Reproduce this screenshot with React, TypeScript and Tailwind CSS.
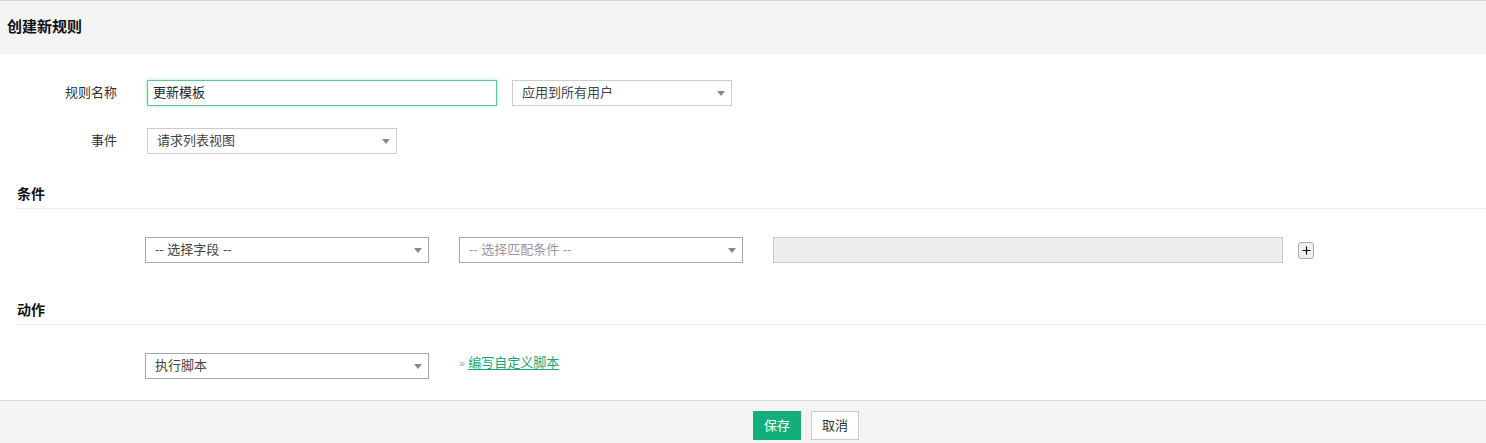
import React from 'react';

const font = { fontFamily: '"Liberation Sans", "Noto Sans CJK SC", sans-serif' };

function Select({ value, width, placeholder, dark }: { value: string; width: string; placeholder?: boolean; dark?: boolean }) {
  return (
    <div
      className={`${width} h-[26px] bg-white border ${dark ? 'border-[#a9a9a9]' : 'border-[#cccccc]'} flex items-center justify-between pl-[9px] pr-[6px]`}
    >
      <span className={`text-[13px] ${placeholder ? 'text-[#999]' : 'text-[#444]'}`}>{value}</span>
      <span className="w-0 h-0 border-l-[4px] border-r-[4px] border-t-[5px] border-l-transparent border-r-transparent border-t-[#888]" />
    </div>
  );
}

export default function App() {
  return (
    <div className="w-[1486px] h-[443px] bg-white text-[#333] overflow-hidden" style={font}>
      {/* header */}
      <div className="border-t border-[#d6d6d6] bg-[#f4f4f4] h-[54px] flex items-center px-[7px]">
        <h1 className="text-[15px] font-bold text-[#111]">创建新规则</h1>
      </div>

      {/* rule name */}
      <div className="mt-[26px] flex items-center h-[26px]">
        <label className="w-[117px] text-right text-[13px]">规则名称</label>
        <div className="ml-[30px] w-[350px] h-[26px] border border-[#5cc49a] shadow-[0_0_4px_rgba(92,196,154,0.45)] flex items-center pl-[5px] text-[13px] text-[#222]">
          更新模板
        </div>
        <div className="ml-[15px]">
          <Select value="应用到所有用户" width="w-[220px]" />
        </div>
      </div>

      {/* event */}
      <div className="mt-[22px] flex items-center h-[26px]">
        <label className="w-[117px] text-right text-[13px]">事件</label>
        <div className="ml-[30px]">
          <Select value="请求列表视图" width="w-[250px]" />
        </div>
      </div>

      {/* conditions */}
      <div className="mt-[30px] ml-[17px] border-b border-[#ebebeb] pb-[4px]">
        <h2 className="h-[20px] leading-[20px] text-[14px] font-bold text-[#111]">条件</h2>
      </div>
      <div className="mt-[28px] flex items-center pl-[145px]">
        <Select value="-- 选择字段 --" width="w-[284px]" dark />
        <div className="ml-[30px]">
          <Select value="-- 选择匹配条件 --" width="w-[284px]" placeholder dark />
        </div>
        <div className="ml-[30px] w-[510px] h-[26px] bg-[#ededed] border border-[#cccccc]" />
        <button className="ml-[15px] w-[16px] h-[17px] rounded-[3px] border border-[#aaaaaa] bg-[#f0f0f0] flex items-center justify-center">
          <svg width="9" height="9" viewBox="0 0 9 9">
            <path d="M4.5 0.5v8M0.5 4.5h8" stroke="#111" strokeWidth="1.2" />
          </svg>
        </button>
      </div>

      {/* actions */}
      <div className="mt-[37px] ml-[17px] border-b border-[#ebebeb] pb-[4px]">
        <h2 className="h-[20px] leading-[20px] text-[14px] font-bold text-[#111]">动作</h2>
      </div>
      <div className="mt-[28px] flex items-center pl-[145px]">
        <Select value="执行脚本" width="w-[284px]" dark />
        <div className="ml-[30px] text-[13px] flex items-center gap-[3px] -mt-[6px]">
          <span className="text-[#5fb894] text-[11px]">»</span>
          <a className="text-[#13a97a] underline underline-offset-2">编写自定义脚本</a>
        </div>
      </div>

      {/* footer */}
      <div className="mt-[21px] border-t border-[#dcdcdc] bg-[#f4f4f4] h-[43px] flex justify-center items-start pt-[10px] pl-[126px] gap-[10px]">
        <button className="w-[48px] h-[29px] bg-[#14ae7a] text-white text-[13px]">保存</button>
        <button className="w-[48px] h-[29px] bg-white border border-[#cccccc] text-[#333] text-[13px]">取消</button>
      </div>
    </div>
  );
}
